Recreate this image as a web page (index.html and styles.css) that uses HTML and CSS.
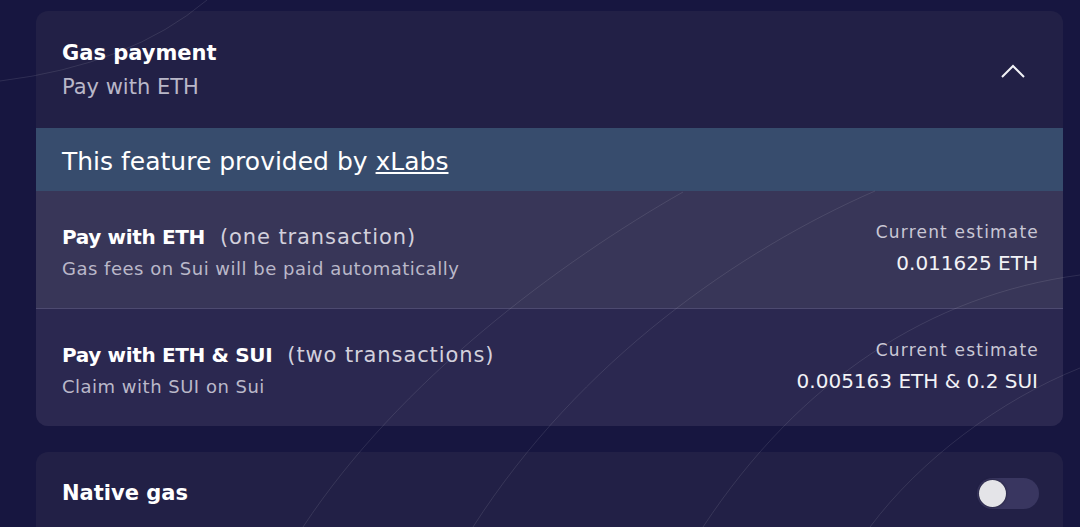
FILE: index.html
```html
<!DOCTYPE html>
<html lang="en">
<head>
    <meta charset="UTF-8">
    <meta name="viewport" content="width=device-width, initial-scale=1.0">
    <title>Gas payment</title>
    <link rel="stylesheet" href="styles.css">
</head>
<body>
    <div class="page">
        <div class="card">
            <div class="card-head">
                <div>
                    <div class="title">Gas payment</div>
                    <div class="subtitle">Pay with ETH</div>
                </div>
                <svg class="chevron" width="24" height="14" viewBox="0 0 24 14">
                    <path d="M1 13 L12 2 L23 13" fill="none" stroke="#f2f2f6" stroke-width="2"/>
                </svg>
            </div>

            <div class="banner">This feature provided by <a href="#">xLabs</a></div>

            <div class="option active">
                <div class="opt-left">
                    <div class="opt-title"><b>Pay with ETH</b><span>(one transaction)</span></div>
                    <div class="opt-sub">Gas fees on Sui will be paid automatically</div>
                </div>
                <div class="opt-right">
                    <div class="est-label">Current estimate</div>
                    <div class="est-value">0.011625 ETH</div>
                </div>
            </div>

            <div class="option">
                <div class="opt-left">
                    <div class="opt-title"><b>Pay with ETH &amp; SUI</b><span>(two transactions)</span></div>
                    <div class="opt-sub">Claim with SUI on Sui</div>
                </div>
                <div class="opt-right">
                    <div class="est-label">Current estimate</div>
                    <div class="est-value">0.005163 ETH &amp; 0.2 SUI</div>
                </div>
            </div>
        </div>

        <div class="card card-last">
            <div class="card-head short">
                <div class="title">Native gas</div>
                <div class="toggle"><div class="knob"></div></div>
            </div>
        </div>
    </div>

    <!-- decorative background arcs -->
    <svg class="arcs" width="1080" height="527" viewBox="0 0 1080 527">
        <path d="M0 81 Q130 65 207 0"/>
        <path d="M683 192 C560 262 400 380 303 527"/>
        <path d="M875 191 C740 250 580 360 473 527"/>
        <path d="M1080 275 C930 295 800 380 703 527"/>
        <path d="M1080 368 C1000 400 920 460 870 527"/>
    </svg>
</body>
</html>
```

FILE: styles.css
```css
* { margin: 0; padding: 0; box-sizing: border-box; }
body {
    font-family: "DejaVu Sans", "Open Sans", sans-serif;
    background: #171640;
    color: #fff;
    overflow: hidden;
    height: 527px;
}
.page {
    padding: 11px 17px 0 36px;
    display: flex;
    flex-direction: column;
    gap: 26px;
}
.card {
    background: #222046;
    border-radius: 12px;
    overflow: hidden;
}
.card-last { height: 120px; }
.card-head {
    height: 117px;
    display: flex;
    justify-content: space-between;
    align-items: center;
    padding: 0 38px 0 26px;
}
.card-head.short {
    height: 82px;
    padding-right: 24px;
}
.title {
    font-size: 21px;
    font-weight: 700;
    line-height: 34px;
}
.subtitle {
    font-size: 21px;
    line-height: 34px;
    color: #b9b7c8;
}
.chevron { margin-top: 3px; }
.banner {
    height: 63px;
    line-height: 63px;
    padding-top: 2px;
    background: #374c6d;
    padding-left: 26px;
    font-size: 25px;
}
.banner a { color: #fff; }
.option {
    height: 117px;
    display: flex;
    justify-content: space-between;
    align-items: center;
    padding: 3px 25px 0 26px;
    background: #2b2850;
}
.option.active {
    background: #383658;
    border-bottom: 1px solid #4d4a70;
    height: 118px;
}
.opt-title {
    font-size: 21px;
    line-height: 36px;
}
.opt-title b {
    font-size: 20px;
    font-weight: 700;
    letter-spacing: -0.35px;
}
.opt-title span {
    margin-left: 15px;
    color: #d2d0dc;
    letter-spacing: 0.9px;
}
.opt-sub {
    font-size: 18px;
    line-height: 28px;
    letter-spacing: 0.5px;
    color: #bab8c9;
}
.opt-right {
    text-align: right;
    margin-top: -6px;
}
.est-label {
    font-size: 17px;
    line-height: 30px;
    letter-spacing: 1.2px;
    margin-right: -1px;
    color: #c9c7d5;
}
.est-value {
    font-size: 20px;
    line-height: 32px;
    color: #f2f2f6;
}
.toggle {
    width: 62px;
    height: 31px;
    border-radius: 16px;
    background: #393660;
    display: flex;
    align-items: center;
    padding-left: 2px;
}
.knob {
    width: 27px;
    height: 27px;
    border-radius: 50%;
    background: #e4e4e8;
    box-shadow: 0 0 3px rgba(0,0,0,0.5);
}
.arcs {
    position: fixed;
    left: 0;
    top: 0;
    pointer-events: none;
}
.arcs path {
    fill: none;
    stroke: rgba(255,255,255,0.1);
    stroke-width: 1;
}
```
